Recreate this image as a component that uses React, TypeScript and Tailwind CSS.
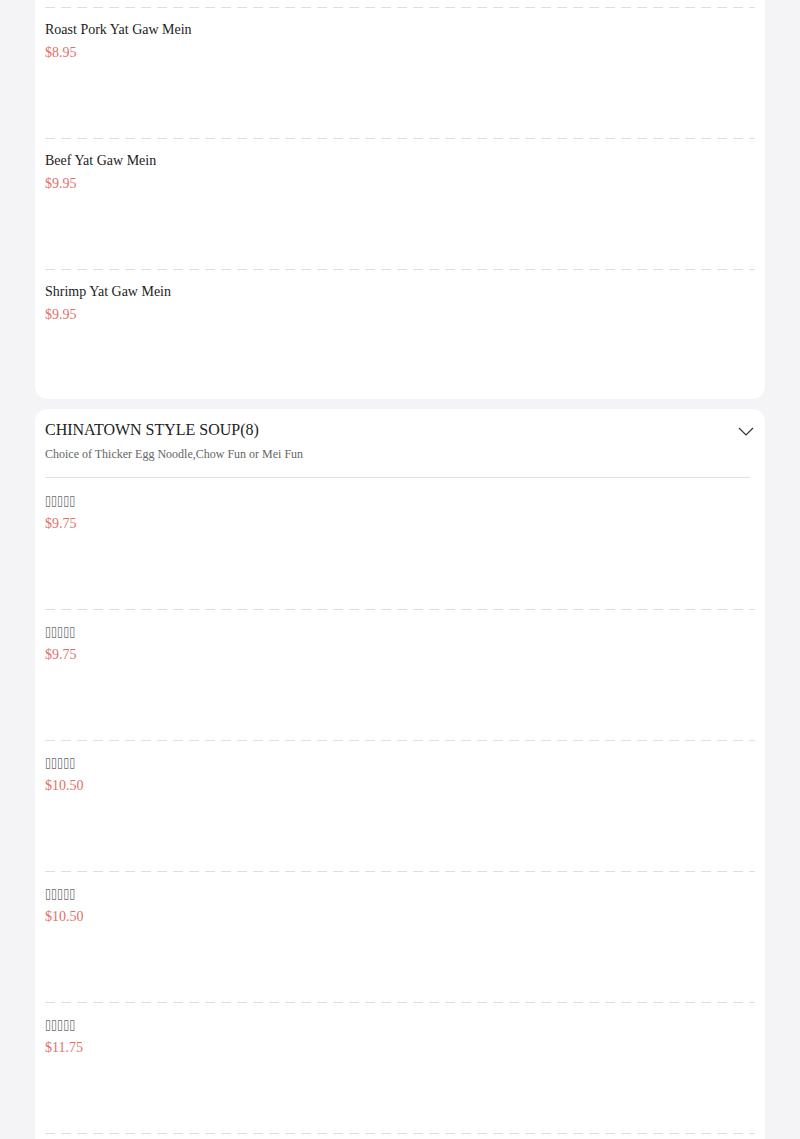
import React from "react";

const serif = { fontFamily: '"Liberation Serif", "Times New Roman", serif' };

type Item = { name: string; price: string; cjk?: boolean };

const card1: Item[] = [
  { name: "Roast Pork Yat Gaw Mein", price: "$8.95" },
  { name: "Beef Yat Gaw Mein", price: "$9.95" },
  { name: "Shrimp Yat Gaw Mein", price: "$9.95" },
];

const tofu = "\u25AF\u25AF\u25AF\u25AF\u25AF";

const card2: Item[] = [
  { name: tofu, price: "$9.75", cjk: true },
  { name: tofu, price: "$9.75", cjk: true },
  { name: tofu, price: "$10.50", cjk: true },
  { name: tofu, price: "$10.50", cjk: true },
  { name: tofu, price: "$11.75", cjk: true },
  { name: tofu, price: "$11.75", cjk: true },
];

function Dashed() {
  return (
    <div className="h-px w-full bg-[repeating-linear-gradient(90deg,#dedede_0px,#dedede_10px,transparent_10px,transparent_16px)]" />
  );
}

function Row({ item, first, last }: { item: Item; first?: boolean; last?: boolean }) {
  return (
    <div className={last ? "h-[130px]" : "h-[131px]"}>
      {first ? <div className="h-px" /> : <Dashed />}
      <div className="pt-[13px]">
        {item.cjk ? (
          <div
            className="h-[18px] text-[11px] leading-[17px] text-[#666]"
            style={{ fontFamily: '"DejaVu Sans", sans-serif', transform: "scaleY(1.2)", transformOrigin: "left center" }}
          >
            {item.name}
          </div>
        ) : (
          <div className="text-[14px] leading-[18px] text-[#222]">{item.name}</div>
        )}
        <div className="mt-[5px] text-[14px] leading-[18px] text-[#e0706a]">{item.price}</div>
      </div>
    </div>
  );
}

export default function App() {
  return (
    <div className="min-h-screen bg-[#f4f4f6]" style={serif}>
      <div className="mx-[35px]">
        <div className="rounded-b-[12px] bg-white px-[10px] pt-[7px]">
          {card1.map((it, i) => (
            <Row key={i} item={it} last={i === card1.length - 1} />
          ))}
        </div>
        <div className="mt-[10px] rounded-[12px] bg-white px-[10px]">
          <div className="mr-[5px] border-b border-[#e2e2e2] pt-[11px] pb-[15px]">
            <div className="flex items-center justify-between">
              <div className="text-[16px] leading-[20px] text-[#222]">CHINATOWN STYLE SOUP(8)</div>
              <svg width="16" height="9" viewBox="0 0 16 9" className="mr-[-4px] mt-[3px]">
                <polyline points="1,1 8,8 15,1" fill="none" stroke="#333" strokeWidth="1.2" />
              </svg>
            </div>
            <div className="mt-[6px] text-[12px] leading-[16px] text-[#666]">
              Choice of Thicker Egg Noodle,Chow Fun or Mei Fun
            </div>
          </div>
          {card2.map((it, i) => (
            <Row key={i} item={it} first={i === 0} />
          ))}
        </div>
      </div>
    </div>
  );
}
